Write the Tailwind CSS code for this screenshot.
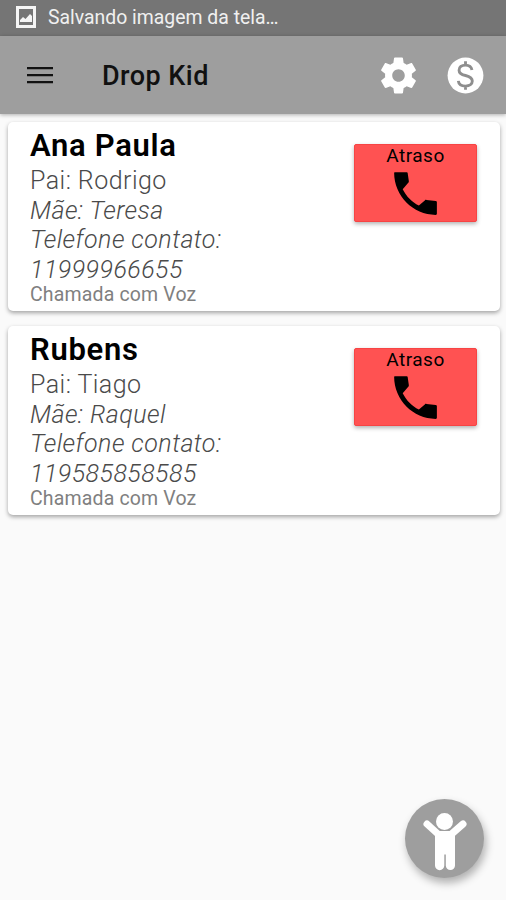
<!DOCTYPE html>
<html lang="pt-BR">
<head>
    <meta charset="UTF-8">
    <meta name="viewport" content="width=device-width, initial-scale=1.0">
    <script src="https://cdn.jsdelivr.net/npm/@tailwindcss/browser@4"></script>
    <title>Drop Kid</title>
</head>
<body class="bg-[#fafafa] font-['Roboto',sans-serif] h-screen overflow-hidden flex flex-col">
    <!-- status bar -->
    <div class="h-9 shrink-0 bg-[#757575] flex items-center pl-4 pb-0.5">
        <svg class="w-5 h-[22px]" viewBox="0 0 20 22" fill="none">
            <rect x="1.5" y="1.5" width="17" height="19" stroke="#f5f5f5" stroke-width="3"/>
            <path d="M4 16v-2l3-3 2.500 2 4.500-5 2 2v6z" fill="#f5f5f5"/>
        </svg>
        <span class="ml-3 pt-0.5 text-[19.400px] leading-none text-[#f0f0f0] whitespace-nowrap">Salvando imagem da tela…</span>
    </div>

    <!-- app bar -->
    <header class="h-[78px] shrink-0 bg-[#9e9e9e] flex items-center pl-[27px] pr-[19px] shadow-[0_1px_4px_rgba(0,0,0,0.3)]">
        <button>
            <svg class="w-[26px] h-[18px]" viewBox="0 0 26 18" fill="#111">
                <path d="M0 1h26v2.300H0zM0 8h26v2.300H0zM0 15h26v2.300H0z"/>
            </svg>
        </button>
        <h1 class="ml-[49px] pt-[3px] text-[27px] font-medium tracking-[0.45px] leading-none text-[#111]">Drop Kid</h1>
        <div class="ml-auto flex items-center gap-6">
            <button>
                <svg class="w-[43px] h-[43px]" viewBox="0 0 24 24" fill="#fff">
                    <path d="M19.430 12.980c.04-.32.07-.64.07-.98s-.03-.66-.07-.98l2.110-1.650c.19-.15.24-.42.12-.64l-2-3.460c-.12-.22-.39-.3-.61-.22l-2.490 1c-.52-.4-1.080-.73-1.690-.98l-.38-2.650C14.460 2.180 14.250 2 14 2h-4c-.25 0-.46.18-.49.42l-.38 2.650c-.61.25-1.170.59-1.690.98l-2.490-1c-.23-.09-.49 0-.61.22l-2 3.460c-.13.22-.07.49.12.64l2.110 1.650c-.04.32-.07.65-.07.98s.03.66.07.98l-2.110 1.650c-.19.15-.24.42-.12.64l2 3.460c.12.22.39.3.61.22l2.490-1c.52.4 1.080.73 1.690.98l.38 2.650c.03.24.24.42.49.42h4c.25 0 .46-.18.49-.42l.38-2.650c.61-.25 1.170-.59 1.690-.98l2.490 1c.23.09.49 0 .61-.22l2-3.460c.12-.22.07-.49-.12-.64l-2.110-1.650zM12 15.500c-1.930 0-3.500-1.570-3.500-3.500s1.570-3.500 3.500-3.500 3.500 1.570 3.500 3.500-1.570 3.500-3.500 3.500z"/>
                </svg>
            </button>
            <button>
                <svg class="w-[43px] h-[43px]" viewBox="0 0 24 24" fill="none">
                    <circle cx="12" cy="12" r="10" fill="#fff"/>
                    <path d="M15.600 8.900C15.300 7.200 14 6.200 12 6.200c-2.200 0-3.600 1.100-3.600 2.800 0 1.800 1.500 2.500 3.600 3 2.300.6 3.800 1.300 3.800 3.100 0 1.700-1.500 2.800-3.800 2.800s-3.800-1.100-4-2.900M12 4v2.400M12 17.700v2.300" stroke="#8e8e8e" stroke-width="1.600"/>
                </svg>
            </button>
        </div>
    </header>

    <main class="flex flex-col gap-[15px] pt-2 pl-2 pr-1.5">
        <div class="h-[189px] bg-white rounded-[5px] shadow-[0_2px_4px_rgba(0,0,0,0.35)] flex justify-between pl-[22px] pr-[23px]">
            <div class="pt-1 text-[25px] leading-[29.500px] tracking-[0.45px] font-light text-[#4a4a4a]">
                <h2 class="text-[31px] leading-10 font-semibold tracking-[0.7px] text-black">Ana Paula</h2>
                <p>Pai: Rodrigo</p>
                <p class="italic">Mãe: Teresa</p>
                <p class="italic">Telefone contato:</p>
                <p class="italic">11999966655</p>
                <p class="text-[19.500px] leading-[21px] tracking-[0.15px] font-normal text-[#808080]">Chamada com Voz</p>
            </div>
            <button class="mt-[22px] w-[123px] h-[78px] bg-[#ff5252] border border-[#f74444] rounded-xs shadow-[0_2px_4px_rgba(0,0,0,0.3)] flex flex-col items-center">
                <span class="text-[19px] leading-[22px] tracking-[0.5px] text-black">Atraso</span>
                <svg class="w-[57px] h-[57px] shrink-0 -mt-0.5" viewBox="0 0 24 24" fill="#000">
                    <path d="M3.300 3h5c.25 0 .4.150.4.400l.5 3.400c0 .3-.05.5-.25.700L6.620 10.200c1.500 3 3.900 5.400 6.800 6.900l2.500-2.200c.2-.2.4-.25.7-.2l3.900.5c.3.050.48.200.48.500v4.800c0 .3-.2.5-.5.500C11 21 3 13 3 3.300c0-.2.100-.3.300-.3z"/>
                </svg>
            </button>
        </div>

        <div class="h-[189px] bg-white rounded-[5px] shadow-[0_2px_4px_rgba(0,0,0,0.35)] flex justify-between pl-[22px] pr-[23px]">
            <div class="pt-1 text-[25px] leading-[29.500px] tracking-[0.45px] font-light text-[#4a4a4a]">
                <h2 class="text-[31px] leading-10 font-semibold tracking-[0.7px] text-black">Rubens</h2>
                <p>Pai: Tiago</p>
                <p class="italic">Mãe: Raquel</p>
                <p class="italic">Telefone contato:</p>
                <p class="italic">119585858585</p>
                <p class="text-[19.500px] leading-[21px] tracking-[0.15px] font-normal text-[#808080]">Chamada com Voz</p>
            </div>
            <button class="mt-[22px] w-[123px] h-[78px] bg-[#ff5252] border border-[#f74444] rounded-xs shadow-[0_2px_4px_rgba(0,0,0,0.3)] flex flex-col items-center">
                <span class="text-[19px] leading-[22px] tracking-[0.5px] text-black">Atraso</span>
                <svg class="w-[57px] h-[57px] shrink-0 -mt-0.5" viewBox="0 0 24 24" fill="#000">
                    <path d="M3.300 3h5c.25 0 .4.150.4.400l.5 3.400c0 .3-.05.5-.25.700L6.620 10.200c1.500 3 3.900 5.400 6.800 6.900l2.500-2.200c.2-.2.4-.25.7-.2l3.900.5c.3.050.48.200.48.500v4.800c0 .3-.2.5-.5.500C11 21 3 13 3 3.300c0-.2.100-.3.300-.3z"/>
                </svg>
            </button>
        </div>
    </main>

    <!-- floating button -->
    <button class="fixed right-[22px] bottom-[22px] w-[79px] h-[79px] rounded-full bg-[#9e9e9e] shadow-[2px_5px_9px_rgba(0,0,0,0.3)]">
        <svg class="w-[79px] h-[79px]" viewBox="0 0 79 79" fill="#fff">
            <circle cx="39.500" cy="22.500" r="8.500"/>
            <path d="M22 25L33.500 35.500M58 25L46 35.500" stroke="#fff" stroke-width="7" stroke-linecap="round"/>
            <path d="M30 32h20v34.500a4.500 4.500 0 0 1-9.200 0V55.500h-1.500v11a4.500 4.500 0 0 1-9.300 0z"/>
        </svg>
    </button>
</body>
</html>
